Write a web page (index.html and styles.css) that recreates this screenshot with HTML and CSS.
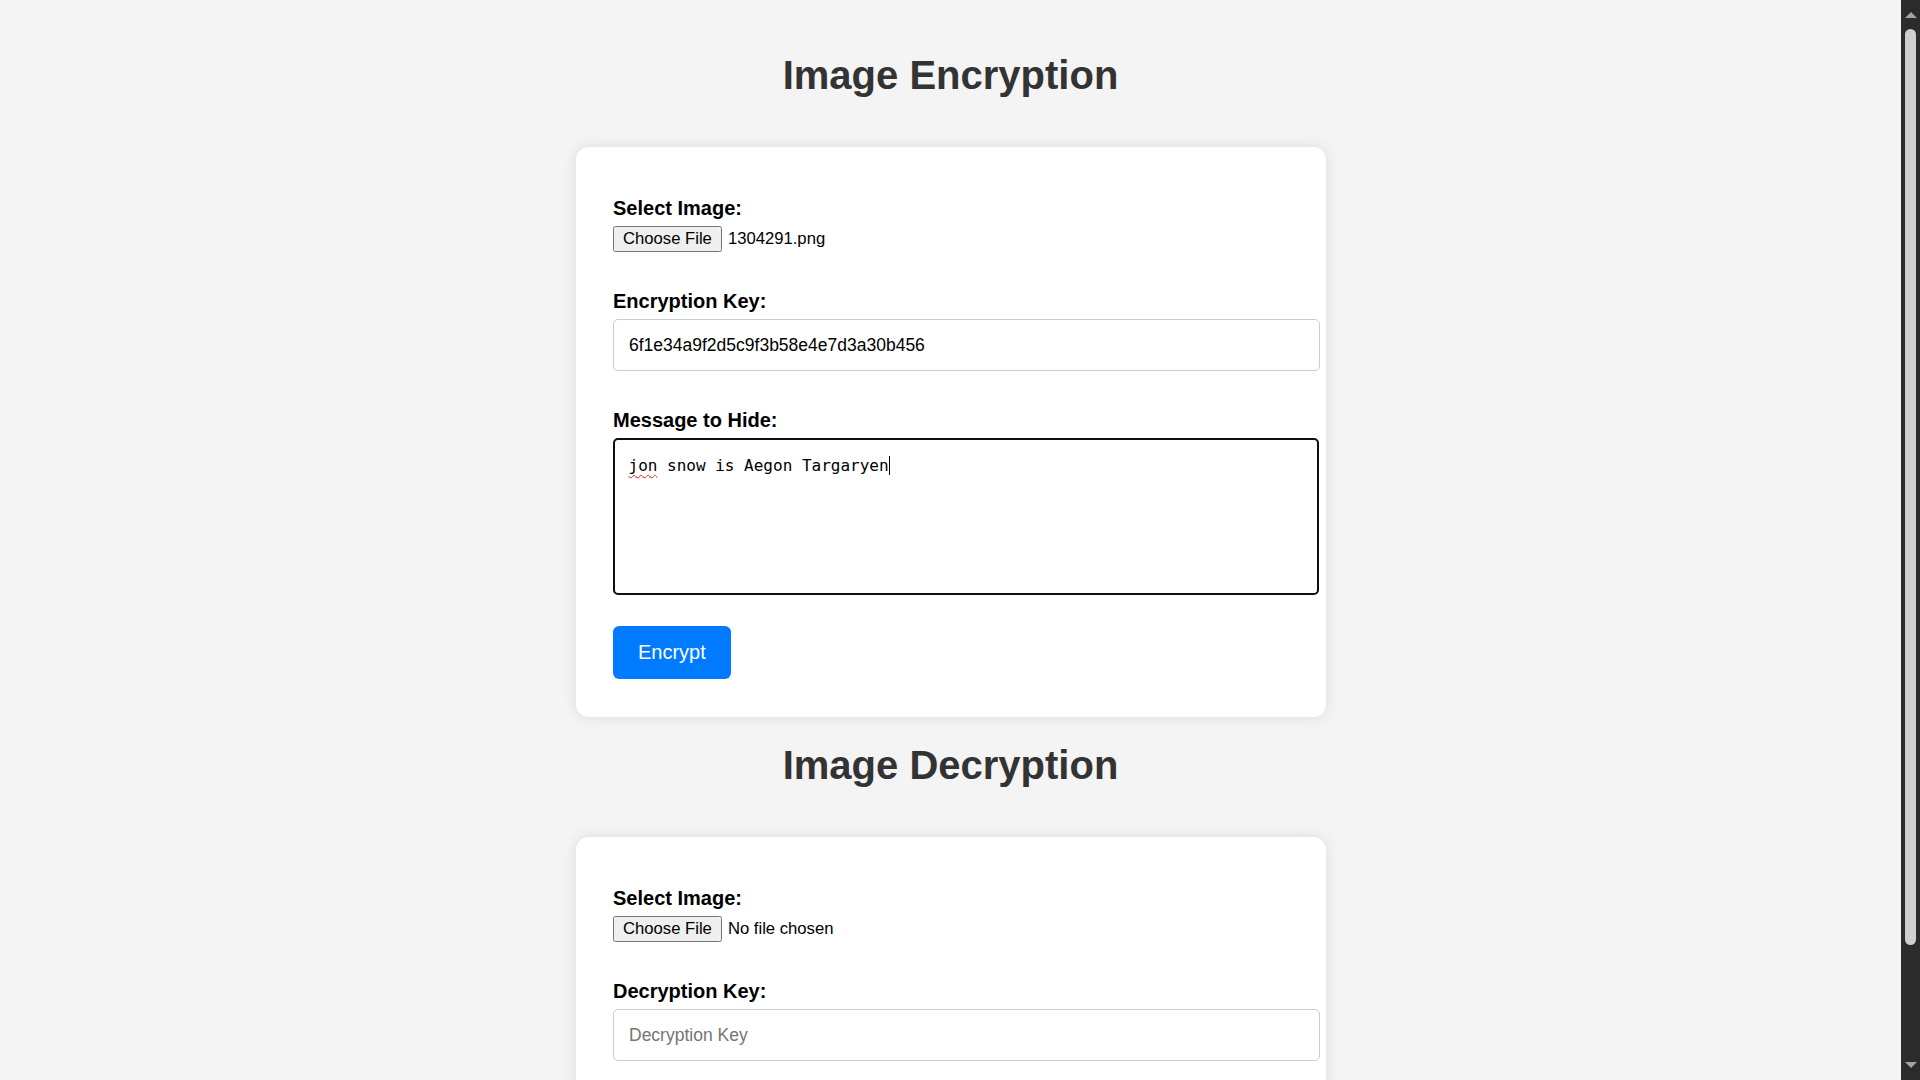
FILE: index.html
```html
<!DOCTYPE html>
<html lang="en">
<head>
<meta charset="utf-8">
<title>Image Encryption</title>
<link rel="stylesheet" href="styles.css">
</head>
<body>
  <h1 class="title">Image Encryption</h1>
  <div class="card">
    <div class="group">
      <label class="label">Select Image:</label>
      <div class="file-row">
        <span class="file-btn">Choose File</span>
        <span class="file-name">1304291.png</span>
      </div>
    </div>
    <div class="group">
      <label class="label">Encryption Key:</label>
      <input class="field" type="text" value="6f1e34a9f2d5c9f3b58e4e7d3a30b456" placeholder="Encryption Key">
    </div>
    <div class="group group-msg">
      <label class="label">Message to Hide:</label>
      <div class="field area focused"><span class="misspelled">jon</span> snow is Aegon Targaryen<span class="caret"></span></div>
    </div>
    <button class="btn">Encrypt</button>
  </div>

  <h1 class="title title-second">Image Decryption</h1>
  <div class="card card-last">
    <div class="group">
      <label class="label">Select Image:</label>
      <div class="file-row">
        <span class="file-btn">Choose File</span>
        <span class="file-name">No file chosen</span>
      </div>
    </div>
    <div class="group">
      <label class="label">Decryption Key:</label>
      <input class="field" type="text" placeholder="Decryption Key">
    </div>
    <button class="btn">Decrypt</button>
  </div>

  <div class="scrollbar">
    <span class="sb-arrow sb-up"></span>
    <span class="sb-thumb"></span>
    <span class="sb-arrow sb-down"></span>
  </div>
</body>
</html>
```

FILE: styles.css
```css
html {
  background: #f4f4f4;
  overflow: hidden;
}

body {
  margin: 0;
  padding: 25px 44px 25px 25px;
  font-family: "Liberation Sans", Arial, sans-serif;
  background: #f4f4f4;
  color: #000;
}

.scrollbar {
  position: fixed;
  top: 0;
  right: 0;
  width: 19px;
  height: 100vh;
  background: #2b2b2b;
}

.sb-thumb {
  position: absolute;
  left: 4px;
  top: 29px;
  width: 11px;
  height: 916px;
  border-radius: 6px;
  background: #cfcfcf;
}

.sb-arrow {
  position: absolute;
  left: 3.5px;
  width: 0;
  height: 0;
  border-left: 6px solid transparent;
  border-right: 6px solid transparent;
}

.sb-up {
  top: 12px;
  border-bottom: 6px solid #a3a3a3;
}

.sb-down {
  bottom: 12px;
  border-top: 6px solid #a3a3a3;
}

.title {
  font-size: 40px;
  line-height: 46px;
  font-weight: bold;
  color: #333;
  text-align: center;
  margin: 26.8px 0 49px;
}

.title-second {
  margin-top: 25px;
}

.card {
  box-sizing: border-box;
  width: 750px;
  margin: 0 auto;
  padding: 50px 37.5px 37.5px;
  background: #fff;
  border-radius: 12.5px;
  box-shadow: 0 0 14px rgba(0, 0, 0, 0.1);
}

.card-last {
  margin-bottom: 12px;
}

.group {
  margin-bottom: 37.5px;
}

.group-msg {
  margin-bottom: 31.5px;
}

.label {
  display: block;
  font-size: 20px;
  line-height: 23px;
  font-weight: bold;
  margin-bottom: 6.25px;
}

.file-row {
  display: flex;
  align-items: center;
  gap: 6px;
  height: 26.3px;
  font-size: 16.67px;
}

.file-btn {
  display: inline-flex;
  align-items: center;
  height: 26.3px;
  box-sizing: border-box;
  padding: 0 9px;
  background: #efefef;
  border: 1px solid #767676;
  border-radius: 2.5px;
  color: #000;
  font-size: 16.67px;
}

.file-name {
  color: #000;
}

.field {
  display: block;
  box-sizing: content-box;
  width: 100%;
  margin: 0;
  padding: 15px;
  border: 1px solid #ccc;
  border-radius: 5px;
  font-family: "Liberation Sans", Arial, sans-serif;
  font-size: 17.5px;
  line-height: 20px;
  color: #000;
  background: #fff;
  outline: none;
}

.field::placeholder {
  color: #757575;
}

.area {
  height: 123px;
  font-family: "DejaVu Sans Mono", "Liberation Mono", monospace;
  font-size: 16px;
  line-height: 20.5px;
  white-space: pre-wrap;
}

.focused {
  border: 2.5px solid #101010;
  padding: 16.5px 13.5px 13.5px;
}

.misspelled {
  text-decoration: underline wavy #e0231a;
  text-decoration-thickness: 1px;
  text-underline-offset: 3px;
}

.caret {
  display: inline-block;
  width: 0;
  height: 19px;
  border-left: 1px solid #000;
  vertical-align: -4px;
}

.btn {
  display: block;
  padding: 15px 25px;
  border: none;
  border-radius: 6.25px;
  background: #007bff;
  color: #fff;
  font-family: "Liberation Sans", Arial, sans-serif;
  font-size: 20px;
  line-height: 23px;
  cursor: pointer;
}
```
